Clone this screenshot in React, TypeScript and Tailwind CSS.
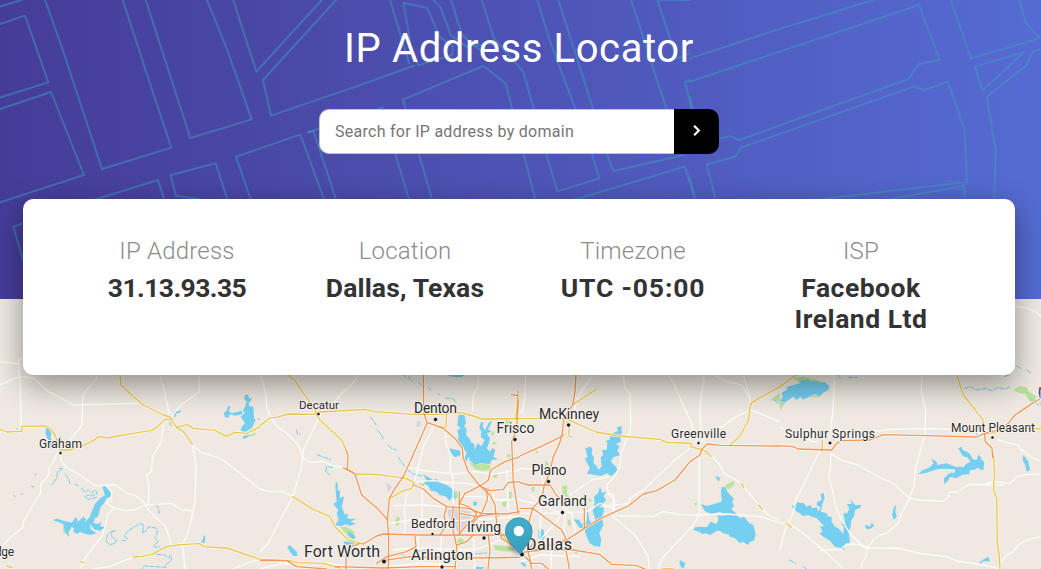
import { ChevronRight } from "lucide-react";

type Tile = {
  x: number;
  white: string[];
  yellow: string[];
  orange: string[];
  water: string[];
  creek: string[];
  green: string[];
};

// Every tile is drawn at three units to the pixel.
const tiles: Tile[] = [
  {
    x: 0,
    white: [
      "57,14 60,20 64,170",
      "0,45 57,20 100,24 145,65 185,85 220,105 420,100",
      "57,20 57,-30 75,-40",
      "0,-25 57,-18",
      "290,14 288,28 264,55 248,78 246,165 212,208 190,238",
      "480,14 494,70 508,130",
      "597,14 597,66 570,85 545,103 515,140",
      "490,165 484,215 470,240 458,258 454,305 440,315 447,350 445,405",
      "577,225 587,280 586,390 578,430 565,485 548,525 555,597",
      "577,225 605,248 660,265 720,310 780,357",
      "181,250 184,272 195,290 245,318 285,347 345,345 385,372 405,375 430,395 445,420 497,470 515,525",
      "172,248 160,275 148,290 145,315 122,345 122,367 70,455 68,472 30,505 0,535",
      "320,400 345,415 375,422 405,420 435,405 515,400 545,420 578,422",
      "345,415 325,430 308,495 255,565 240,597",
      "280,597 330,590 365,575 400,562",
      "320,350 335,365 335,385 320,400",
      "700,597 740,580 780,568",
    ],
    yellow: [
      "0,178 20,186 65,184 66,169 135,168 150,175 165,195 181,240 210,240 250,226 275,215 298,199 322,204 380,193 455,181 470,172 497,148 515,148",
      "360,14 363,45 395,75 430,105 490,135 513,142 518,155 530,172 550,185 577,223",
      "530,172 562,164 580,175 645,181 680,199 704,187 740,190 780,170",
      "400,561 425,559 456,553 500,530 540,524 600,521 610,530 680,534 780,568",
      "240,575 252,578",
      "20,588 38,593",
    ],
    orange: [],
    water: [
      "736,74 744,74 748,86 755,82 752,95 746,98 748,108 760,110 762,145 767,150 755,175 735,186 722,182 725,170 735,160 722,140 735,128 728,122 735,110 740,95 732,85",
      "685,108 692,110 686,122 695,130 725,122 727,133 705,137 690,133 684,144 674,140 672,128 680,122",
      "728,200 740,194 748,198 732,208",
      "134,162 138,172 150,176 154,190 152,205 158,215 155,235 150,232 149,215 142,205 136,190 138,180",
      "525,122 535,124 544,120 540,128 530,130 524,143 522,138",
      "307,350 318,348 330,358 334,378 320,385 312,400 302,410 294,440 284,445 280,460 295,462 305,455 300,468 316,472 300,482 282,478 270,462 270,478 290,490 270,495 250,490 240,485 232,492 220,485 222,475 215,470 205,488 208,502 196,488 190,462 172,455 158,450 170,446 190,452 215,458 228,440 234,455 250,440 258,448 252,460 270,440 275,425 285,402 300,385 315,376",
      "612,498 616,496 614,518 604,518",
    ],
    creek: [
      "245,355 255,368 265,360 275,368 285,360 292,370 275,378 262,375 255,382 265,388 290,382",
      "40,377 45,379",
      "64,374 68,371",
      "95,347 102,353 96,348",
      "104,314 109,312",
      "178,295 188,297 176,305",
      "172,306 170,325 155,345",
      "195,312 205,325 210,342",
      "225,342 235,348",
      "340,482 322,495 318,512 328,524 345,520 350,510 335,500 335,485 348,482",
      "365,510 375,513 382,505 372,498 385,482 405,470 420,460 430,465 428,490 442,478 445,470 470,475 472,490 465,505 475,515 462,525 465,533 480,530",
      "470,553 495,555 505,565 512,555 515,570 498,583 498,592 430,588 426,597",
      "467,405 474,410 475,420 480,426 474,430",
      "50,176 54,180",
      "180,198 184,205",
      "774,146 780,149",
    ],
    green: [
      "508,152 515,157 515,167 507,167",
      "190,460 215,458 222,462 198,488 190,488",
      "258,475 270,465 274,482 262,483",
      "744,196 766,188 768,193 750,201",
    ],
  },
  {
    x: 260,
    white: [
      "2,14 18,75 20,110 32,143 50,168 80,190 115,225 130,265 150,277 190,274 220,288 262,294",
      "297,14 270,50 245,70 225,95 190,120 176,145 130,240 125,290 98,380 60,450 25,520 0,545",
      "0,357 30,365 70,365 100,380",
      "655,14 655,50 640,75 637,120",
      "520,163 515,185 492,225 480,270 470,310 462,340",
      "556,190 558,220 572,255 570,300 578,320 580,410",
      "440,290 490,302 540,307 590,312 640,305 700,312 780,300",
      "470,335 520,332 570,338 620,340 660,348",
      "440,370 432,430 436,440 434,494",
      "400,407 500,405 560,412 600,408",
      "487,350 486,480",
      "390,460 450,450 530,448 600,452 700,445 780,440",
      "475,500 472,597",
      "545,497 540,597",
      "640,497 645,597",
      "400,540 470,532 600,540 660,535 720,510 780,515",
      "700,370 705,450 700,500",
      "740,300 745,420",
      "600,380 660,380 720,390 780,387",
      "390,590 470,580 560,582",
      "0,597 60,582 180,577 250,588",
    ],
    yellow: [
      "82,14 105,32 130,70 165,115 170,135 180,150 245,210 258,240",
      "0,167 30,143 50,142 85,132 160,133 180,126 315,118 345,125 470,134 495,132 530,134 600,128 640,138 665,147 780,146",
      "560,132 558,170 548,174",
      "270,305 287,312 360,314 400,320 440,326 462,338 455,355 430,362 390,385",
      "98,380 160,418 210,440 225,470 265,510 290,518 310,522",
      "0,568 85,571 110,578 190,580 240,594",
      "775,62 770,120 766,146",
      "725,490 745,515 770,535",
    ],
    orange: [
      "490,14 491,125 498,150 502,158 468,235 430,320 405,355 388,385 382,450 386,500 385,597",
      "502,158 548,174 585,205 607,235 610,265 625,305 660,348 690,375 705,405 710,460 725,505 770,535",
      "258,240 264,258 262,298 285,312 305,375 355,418 383,450",
      "262,298 250,294 280,308",
      "310,522 350,498 370,492 480,495 780,495",
      "462,345 490,357 520,385 560,410 625,415 665,430 740,432 780,425",
      "560,410 552,440 560,465 540,495",
      "598,365 598,495",
      "598,400 615,370 640,358 670,342 685,330 692,300 735,275 780,260",
      "598,400 625,410 650,430 640,450 620,465 595,495",
      "660,348 690,362 730,358 745,338 780,335",
      "754,74 772,77",
      "775,90 770,180 755,215 760,335 775,430",
      "680,360 682,390 665,430 635,462",
      "465,500 468,530 440,545 380,560 350,580",
      "370,572 450,560 560,565 780,562",
      "300,520 275,530 258,560 258,597",
      "0,572 80,572 110,590 200,597",
      "225,590 370,594 480,590 585,590",
      "580,410 575,460 590,530 585,597",
      "685,495 690,540 684,597",
      "590,525 620,515 640,495",
      "600,430 650,440 700,432",
    ],
    water: [
      "596,134 614,136 618,160 612,168 620,178 618,195 628,205 634,218 642,220 645,240 652,220 665,228 674,210 662,200 664,185 658,172 664,155 670,158 668,172 676,180 685,160 697,150 690,168 684,178 695,185 680,190 690,205 686,222 680,235 690,245 696,234 706,240 700,260 714,268 695,270 690,282 660,280 645,285 630,272 625,260 618,280 612,265 620,250 605,225 590,215 596,200 592,180 602,175 592,165",
      "568,235 580,238 600,242 602,255 585,262 575,252",
      "488,313 505,322 520,330 530,326 540,338 560,345 570,352 584,362 586,388 575,382 570,392 555,378 540,376 530,365 512,362 505,348 492,340 498,328",
      "228,333 234,345 232,360 240,362 240,385 252,378 248,400 245,410 255,435 264,430 262,446 288,446 270,456 288,460 270,468 258,462 245,468 225,466 236,450 230,430 235,420 220,402 230,395 226,350",
      "262,482 275,490 286,500 280,507 268,500",
      "250,515 280,514 292,524 255,525",
      "82,530 90,526 110,545 112,558 100,558 90,545",
      "563,14 615,14 605,21 590,22 570,19",
      "640,395 652,395 648,408 640,406",
      "645,590 675,592 665,597 648,597",
    ],
    creek: [
      "430,16 438,22",
      "446,20 450,28 460,35",
      "474,36 484,45",
      "504,52 512,60",
      "534,70 540,76",
      "556,84 580,86 588,98",
      "332,142 340,152 348,165",
      "352,180 362,192 370,206",
      "384,226 396,236 410,240",
      "415,262 425,278 436,292",
      "172,254 192,262 212,268",
      "218,292 200,290 197,305 210,315",
      "110,180 112,192 120,192",
      "440,298 460,312 485,318",
      "416,550 436,558",
      "465,545 500,542",
      "580,552 620,555 680,548",
    ],
    green: [
      "625,275 645,284 665,282 692,284 690,300 665,302 645,298",
      "696,215 712,218 700,226",
      "690,192 705,182 700,198",
      "240,470 258,470 280,482 288,506 270,505",
      "412,437 420,445 414,470 405,455",
      "726,396 740,396 738,412 727,408",
      "738,150 750,152 746,162 735,160",
      "742,250 752,255 750,265 741,262",
      "704,308 715,308 708,326 698,320",
      "700,525 750,530 765,542 740,545 705,540",
      "475,342 495,340 490,350",
      "585,365 592,363 594,380 585,390",
      "610,445 620,440 625,450 618,455",
      "590,510 605,505 615,515 595,525",
      "700,430 715,425 718,445",
      "745,365 755,365 755,388 747,385",
    ],
  },
  {
    x: 520,
    white: [
      "17,14 14,90 5,130",
      "220,14 190,55 175,80 163,118",
      "310,14 314,50 330,75 332,160 330,190 316,215 305,245 300,290 285,318 260,345 265,372 280,385 280,410 288,430",
      "445,14 463,45 475,75 485,95 512,155 530,215",
      "550,14 552,30 543,80 540,130 545,215",
      "580,14 620,35 665,45 690,85 690,97",
      "692,120 650,140 575,190 545,215",
      "670,14 680,50 692,85",
      "692,120 780,155",
      "516,230 465,270 370,360 330,385 325,400 240,410",
      "575,258 600,285 612,310 640,325 665,340 680,360 708,395 745,435 780,450",
      "538,265 538,435",
      "0,430 100,430 200,425 240,400 280,415",
      "285,436 400,440 430,424 480,434 520,435 620,432 720,440 780,458",
      "270,432 345,495 385,560 387,597",
      "538,435 520,465 430,560 412,597",
      "265,370 280,375 285,400 278,420",
      "150,375 215,330 270,320",
      "0,295 60,300 70,340",
      "30,375 60,400 110,425 155,430",
      "65,340 62,420 60,500",
      "0,390 40,400 100,390 155,430",
      "135,415 132,500",
      "20,540 120,540 190,545",
      "60,510 110,455 125,430",
      "90,500 95,597",
      "0,575 60,555 180,560",
      "160,500 165,480 155,430",
    ],
    yellow: [
      "0,146 130,146 150,152 228,186 300,198 420,208 440,217 500,219 515,221 512,230 548,240 562,248 573,260",
      "158,104 180,90 230,57",
      "145,195 148,175 140,155",
      "780,50 735,75 695,98 690,110 685,152 660,198 630,225",
      "664,340 672,355",
      "716,405 726,417",
      "430,596 460,597",
    ],
    orange: [
      "168,14 165,65 158,105 132,145 126,195 118,222 100,260 88,310 72,350 65,385 38,415 28,450 20,520 35,597",
      "132,195 100,212 50,235 0,258",
      "0,338 25,345 90,345 108,375 135,395",
      "780,228 600,226 562,222 545,238 540,255 510,275 465,330 410,362 370,372 325,408 275,430 225,455 170,490 140,510 80,530 0,550",
      "0,415 38,415 85,450 125,480 135,500 138,540 148,597",
      "193,415 193,475",
      "20,545 70,540 160,540 238,553 275,583 350,587 375,597",
      "15,560 35,580 65,580 85,597",
      "0,470 30,490 40,520 20,545",
    ],
    water: [
      "304,168 306,190 300,195 303,215 288,222 298,228 292,242 300,255 280,262 272,275 288,290 292,300 282,312 272,318 260,310 242,318 225,315 212,312 200,312 210,295 204,285 194,265 203,262 196,235 210,230 217,235 215,252 222,262 220,280 230,288 235,300 245,290 242,262 250,255 246,240 260,240 262,220 258,212 268,210 270,200 288,198 278,190 294,183 290,172",
      "240,350 246,368 260,365 250,378 258,390 248,402 252,422 246,442 250,465 238,490 244,510 240,530 222,528 208,518 196,488 192,465 190,478 178,472 160,447 178,450 185,462 200,455 202,410 208,450 218,465 228,455 222,435 218,425 224,400 222,380 234,370",
      "586,318 598,322 600,330 594,334",
      "605,352 616,350 622,365 634,378 642,388 636,395 642,408 634,418 648,430 660,445 672,440 688,460 700,465 707,492 702,512 690,515 684,525 668,515 660,520 645,505 630,500 625,492 610,490 600,482 590,482 570,495 558,490 545,492 540,486 520,480 525,472 545,470 560,472 572,455 590,462 596,445 590,436 614,438 600,425 575,432 555,424 550,415 542,402 560,408 590,400 605,395 603,365",
      "55,480 70,478 74,500 68,512 55,502",
      "484,570 490,578 498,576 490,596 482,590 478,576",
      "0,575 15,580 20,590 10,588",
    ],
    creek: ["764,90 770,98 780,100"],
    green: [
      "616,345 642,332 644,340 632,355 622,358",
      "614,485 630,490 622,495",
      "126,348 142,346 140,372 150,380 138,380 128,370",
      "205,385 215,388 210,400",
      "770,75 780,70 780,95 750,90",
      "138,190 158,200 148,202",
      "75,270 88,282 76,290",
      "45,240 55,245 50,252",
      "522,400 530,398 528,410",
      "160,545 172,542 172,552",
      "142,453 150,448 155,465 145,468",
      "35,350 45,352 42,365 36,365",
    ],
  },
  {
    x: 780,
    white: [
      "162,14 162,50 160,110 152,180",
      "425,14 424,65 432,100 437,125 435,190 430,210 405,300 402,350 388,385 360,440 355,460 320,490 300,495 280,510 262,535 258,560 245,582 244,597",
      "0,172 45,190 100,215 115,215",
      "180,205 240,190 330,178 440,176 560,180 610,190",
      "152,250 152,285 146,320 160,370 165,405 185,450 210,490 240,520 262,535",
      "152,250 185,272 235,285 290,318 340,340 388,385",
      "118,245 85,315 50,385 40,430 15,480 0,540",
      "0,460 15,458 50,475 130,540 190,597",
      "120,540 180,540 200,522 240,524 262,535 350,534 430,552 500,560 530,573 610,585 655,595",
      "388,385 420,390 490,394 505,382 506,368 530,366 570,343 640,345",
      "610,345 640,335 690,340 712,320 740,313 783,313",
      "640,345 670,345",
      "655,210 690,220 715,225 725,240 760,265 783,272",
      "660,580 680,555 700,545 715,525 740,510 783,500",
      "700,-192 745,-185 770,-172 783,-160",
    ],
    yellow: [
      "0,50 30,28 50,14",
      "530,14 550,75 608,148 614,190 650,188 660,178 783,176",
      "640,255 644,310 640,360 650,385 652,520 658,560 660,597",
      "128,212 125,245",
      "18,460 34,472",
    ],
    orange: [
      "0,227 40,230 55,237 155,240 170,220 185,212 270,210 310,194 440,197 590,201 614,190 660,178 685,160 705,135 760,98 783,85",
      "614,190 616,215 636,235 638,262",
    ],
    water: [
      "60,20 70,32 85,28 90,35 110,32 118,38 135,36 148,48 145,60 130,68 120,78 105,72 88,80 70,88 60,80 50,90 40,80 25,90 15,98 0,92 8,80 5,68 20,60 22,50 40,45 60,40 65,30",
      "545,230 548,240 560,245 570,252 578,268 590,270 594,255 602,260 605,270 613,275 610,300 598,298 595,292 582,300 570,300 568,312 545,315 530,325 510,320 505,330 493,343 492,325 510,308 525,308 525,298 490,296 470,298 440,308 415,313 425,302 450,292 460,280 455,266 470,275 472,285 500,280 530,292 550,292 558,282 572,275 562,262 548,258 535,235",
      "730,255 738,265 745,275 750,300 740,305 736,285 728,270",
      "50,395 62,400 70,398 80,410 90,405 98,415 110,412 115,425 122,412 110,405 112,395 125,390 122,372 130,368 134,385 128,400 122,425 140,430 145,440 155,440 155,455 165,470 175,475 190,492 192,470 182,460 196,462 190,430 202,430 208,415 200,402 215,402 210,388 225,405 244,405 240,414 225,420 222,440 214,450 212,470 206,485 210,520 195,525 192,540 175,532 165,530 150,512 130,500 118,490 128,485 120,470 132,468 110,445 95,440 85,435 70,438 60,430 50,425 35,408 48,405",
      "348,405 346,425 350,440 342,450 336,435 342,410",
      "254,468 262,465 270,470 275,458 282,466 275,475 260,478",
      "598,578 608,570 625,560 630,574 610,574 600,582",
      "120,180 132,180 130,200 120,196",
    ],
    creek: [
      "535,48 552,56 570,50 590,60 615,55 635,62 655,52 675,58 692,48",
      "172,14 184,26",
      "205,22 232,22",
      "672,20 690,14",
      "28,570 48,580",
      "70,590 80,597",
      "710,-12 722,-5",
      "740,0 755,10",
      "752,85 775,105",
      "595,172 590,195",
    ],
    green: [
      "700,60 720,48 740,52 745,62 770,80 765,92 750,95 735,72 715,68",
      "0,92 14,100 0,122",
      "40,25 70,20 120,32 145,45 60,38",
      "90,80 130,70 115,82",
      "532,290 545,288 550,298 536,300",
      "775,92 783,95 783,108",
    ],
  },
];

type Label = { t: string; x: number; y: number; w: number; s: number; dx: number; dy: number; r: number };

const labels: Label[] = [
  { t: "Graham", x: 39, y: 447.5, w: 43, s: 12, dx: 60.5, dy: 453, r: 1.6 },
  { t: "Decatur", x: 299, y: 409, w: 40, s: 11.5, dx: 318.5, dy: 414, r: 1.6 },
  { t: "Denton", x: 414, y: 413, w: 43, s: 14, dx: 435.5, dy: 419.5, r: 2 },
  { t: "McKinney", x: 539, y: 418.5, w: 60, s: 14, dx: 568.5, dy: 425, r: 2 },
  { t: "Frisco", x: 496.5, y: 433, w: 38, s: 14, dx: 515, dy: 439.5, r: 2 },
  { t: "Greenville", x: 671, y: 437.5, w: 55, s: 12, dx: 698.5, dy: 443, r: 1.6 },
  { t: "Sulphur Springs", x: 785, y: 437.5, w: 90, s: 12, dx: 830, dy: 443, r: 1.8 },
  { t: "Mount Pleasant", x: 951, y: 431.5, w: 84, s: 12, dx: 992.5, dy: 437.5, r: 1.6 },
  { t: "Plano", x: 531.5, y: 475, w: 35, s: 14, dx: 548.5, dy: 481.5, r: 2 },
  { t: "Garland", x: 538, y: 506, w: 49, s: 14, dx: 562.5, dy: 512.5, r: 2 },
  { t: "Bedford", x: 411, y: 528, w: 44, s: 12.5, dx: 432.5, dy: 534, r: 1.6 },
  { t: "Irving", x: 467, y: 532, w: 34, s: 14, dx: 484, dy: 538, r: 2 },
  { t: "Dallas", x: 526, y: 550, w: 46, s: 16, dx: 522, dy: 554.5, r: 2.3 },
  { t: "Fort Worth", x: 304, y: 557, w: 76, s: 16, dx: 384, dy: 561.5, r: 2.3 },
  { t: "Arlington", x: 411, y: 559.5, w: 62, s: 15, dx: 442, dy: 567, r: 2 },
  { t: "dge", x: -5, y: 556, w: 19, s: 12, dx: -20, dy: 560, r: 1 },
];

const streets: { x: number; lines: string[] }[] = [
  {
    x: 0,
    lines: [
      "0,20 65,0",
      "0,72 75,47 145,247 0,293",
      "0,327 153,276 252,525 0,607",
      "135,0 185,140 306,507 514,443 440,220 368,0",
      "437,0 571,414 755,358 680,145 621,0",
      "700,0 769,215 965,0",
      "1008,0 789,240 813,347 1050,266 1240,198",
      "290,597 474,540 492,597",
      "600,597 528,588 512,525 647,490 682,597",
      "752,597 708,470 901,404 972,597",
      "925,397 940,392 1008,597",
      "925,397 1150,322",
      "100,660 40,680 75,800",
    ],
  },
  {
    x: 340,
    lines: [
      "150,0 207,190",
      "165,460 207,597",
      "236,460 276,597",
      "190,8 262,24 298,110 340,140 336,165 235,196 215,150 190,8",
      "280,0 302,22 332,105 380,140 470,130",
      "333,0 366,105 420,150",
      "425,0 462,115 550,215 582,328",
      "198,328 189,299 430,198 497,250 517,328",
      "592,0 632,130 707,328",
      "655,0 760,328",
      "873,0 980,328",
      "1050,0 952,0 1010,175 1050,160",
      "1050,240 1035,246 1055,328",
      "550,460 586,597",
      "618,460 652,574 778,535 755,460",
      "800,460 820,513 1030,466",
      "700,600 1035,500 1060,580",
    ],
  },
  {
    x: 690,
    lines: [
      "0,175 275,85 550,0",
      "0,245 687,15 750,180 687,192 655,237 147,420 122,408 85,417",
      "77,597 50,493 136,470 153,443 670,260 705,270 774,244 824,390 831,546 370,600",
      "600,597 822,558 826,600",
      "782,0 843,175 1050,115 1008,68 988,0",
      "1053,147 1028,155 1010,195 890,290 917,450 913,600",
      "855,200 1003,155 877,272 855,200",
      "0,290 8,328",
      "0,535 15,597",
    ],
  },
];

const facts = [
  { label: "IP Address", value: "31.13.93.35", fit: "tracking-[-0.58px]" },
  { label: "Location", value: "Dallas, Texas", fit: "tracking-[0.15px]" },
  { label: "Timezone", value: "UTC -05:00", fit: "tracking-[0.85px]" },
  { label: "ISP", value: "Facebook Ireland Ltd", fit: "tracking-[0.5px]" },
];

function Lines({ items, color, width, dash }: { items: string[]; color: string; width: number; dash?: string }) {
  return (
    <g fill="none" stroke={color} strokeWidth={width} strokeLinejoin="round" strokeLinecap="round" strokeDasharray={dash}>
      {items.map((p) => (
        <polyline key={p} points={p} />
      ))}
    </g>
  );
}

function Shapes({ items, color }: { items: string[]; color: string }) {
  return (
    <g fill={color}>
      {items.map((p) => (
        <polygon key={p} points={p} />
      ))}
    </g>
  );
}

function StreetPattern() {
  return (
    <svg className="absolute inset-0" width="1041" height="299" viewBox="0 0 1041 299" aria-hidden="true">
      {streets.map((s) => (
        <g key={s.x} transform={`translate(${s.x} 0) scale(0.33333)`}>
          <Lines items={s.lines} color="rgba(64,156,190,0.48)" width={6} />
        </g>
      ))}
    </svg>
  );
}

function RegionMap() {
  return (
    <svg className="block" width="1041" height="270" viewBox="0 0 1041 270">
      <rect width="1041" height="270" fill="#efe9e1" />
      {tiles.map((t) => (
        <svg key={t.x} x={t.x} y={0} width={t.x === 780 ? 261 : 260} height={270} viewBox={`0 -213 ${t.x === 780 ? 783 : 780} 810`}>
          <Shapes items={t.green} color="#bce29f" />
          {t.x === 260 && (
            <Shapes
              items={["562,420 595,412 632,425 634,455 598,495 568,450", "378,338 396,350 385,370", "470,154 482,152 480,172 470,170"]}
              color="#d6d5df"
            />
          )}
          <Shapes items={t.water} color="#75cff0" />
          <Lines items={t.creek} color="#75cff0" width={3} dash="14 5" />
          <Lines items={t.white} color="#fdfcfa" width={4} />
          <Lines items={t.yellow} color="#fffaf0" width={8} />
          <Lines items={t.orange} color="#fffaf3" width={8} />
          <Lines items={t.yellow} color="#e9c552" width={4} />
          <Lines items={t.orange} color="#f1975a" width={4} />
        </svg>
      ))}
      <g>
        <path d="M1041 87 q-3 1 -3 7 q1 6 3 7z" fill="#3f51a3" stroke="#fff" strokeWidth="1" />
        <path d="M1038.5 91 l1 -3 h2 v3z" fill="#d0404a" />
      </g>
      <g transform="translate(0 -299)">
        {labels.map((l) => (
          <g key={l.t}>
            <circle cx={l.dx} cy={l.dy} r={l.r} fill="#111" stroke="#fff" strokeOpacity="0.7" strokeWidth="0.8" />
            <text
              x={l.x}
              y={l.y}
              fontSize={l.s}
              textLength={l.w}
              className="font-['Roboto',sans-serif]"
              fill="#2c2c30"
              stroke="#f8f4ef"
              strokeOpacity="0.85"
              strokeWidth="2.2"
              strokeLinejoin="round"
              paintOrder="stroke"
            >
              {l.t}
            </text>
          </g>
        ))}
        <defs>
          <linearGradient id="pin" x1="0" y1="0" x2="0" y2="1">
            <stop offset="0" stopColor="#43adca" />
            <stop offset="1" stopColor="#369fc0" />
          </linearGradient>
          <filter id="soft" x="-50%" y="-50%" width="200%" height="200%">
            <feGaussianBlur stdDeviation="2" />
          </filter>
        </defs>
        <path d="M519 555 L508 547 Q515 538 522 546z" fill="#000" opacity="0.4" filter="url(#soft)" />
        <path
          d="M519.5 553.5 C515 547 505.5 541 505.5 531 A13.3 13.3 0 0 1 532.1 531 C532.1 541 524 547 521 553.5 Q520.2 554.5 519.5 553.5z"
          fill="url(#pin)"
          stroke="#318ba9"
          strokeWidth="0.8"
        />
        <circle cx="518.8" cy="531" r="5.5" fill="#fff" stroke="#318ba9" strokeWidth="0.6" />
      </g>
    </svg>
  );
}

export default function App() {
  return (
    <main className="relative h-[569px] w-[1041px] overflow-hidden font-['Roboto',sans-serif]">
      <header className="relative h-[299px] bg-linear-to-r from-[#453c98] to-[#556bd3]">
        <StreetPattern />
        <div className="relative flex flex-col items-center pr-[3px] pt-[25px]">
          <h1 className="text-[40px] leading-[48px] tracking-[0.6px] text-white">IP Address Locator</h1>
          <form className="mt-9 flex h-[45px] w-[400px]" onSubmit={(e) => e.preventDefault()}>
            <input
              type="text"
              placeholder="Search for IP address by domain"
              className="h-full min-w-0 flex-1 rounded-l-[10px] border border-r-0 border-[#c6c6ca] bg-white px-[15px] text-base tracking-[0.27px] outline-none placeholder:text-[#757575]"
            />
            <button type="submit" aria-label="Search" className="flex w-[45px] items-center justify-center rounded-r-[10px] bg-black text-white">
              <ChevronRight className="mb-0.5 size-[19px]" strokeWidth={2.8} strokeLinecap="butt" strokeLinejoin="miter" />
            </button>
          </form>
        </div>
      </header>
      <RegionMap />
      <section className="absolute left-[23px] top-[199px] grid h-[176px] w-[992px] grid-cols-4 rounded-[10px] bg-white px-10 pt-[37px] text-center shadow-[0_10px_30px_rgba(0,0,0,0.4)]">
        {facts.map((f) => (
          <div key={f.label} className="px-8">
            <h2 className="text-[24px] font-light leading-[30px] tracking-[0.2px] text-[#8c8c8c]">{f.label}</h2>
            <p className={`mt-1.5 text-[26.5px] font-bold leading-[31px] text-[#333333] ${f.fit}`}>{f.value}</p>
          </div>
        ))}
      </section>
    </main>
  );
}
